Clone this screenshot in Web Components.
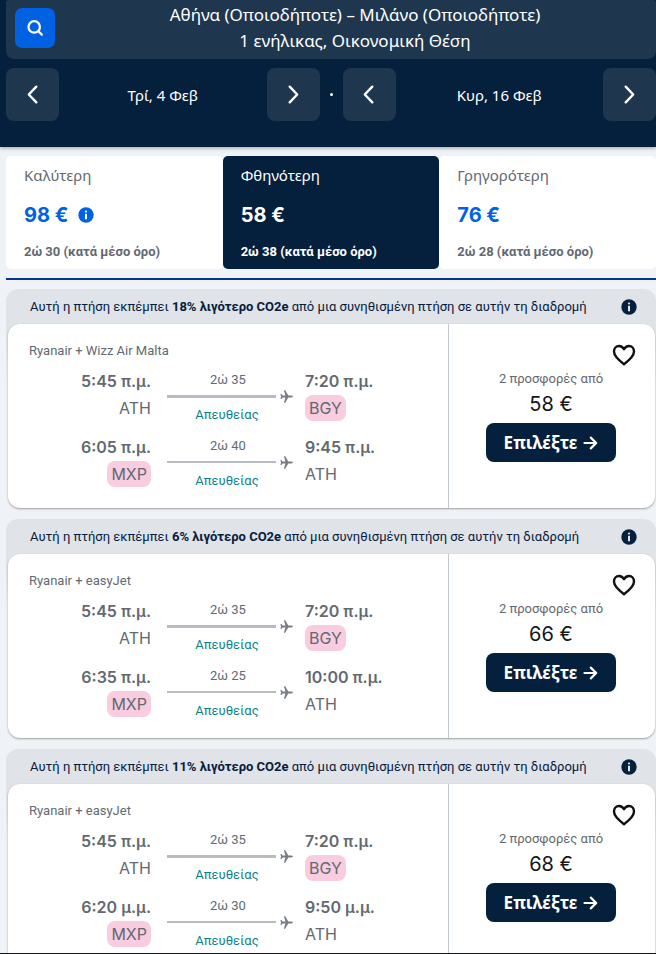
<!DOCTYPE html>
<html lang="el">
<head>
<meta charset="utf-8">
<meta name="viewport" content="width=device-width, initial-scale=1">
<title>Αθήνα – Μιλάνο</title>
<style>
  :root {
    --navy: #05203c;
    --navy-light: #1f364f;
    --blue: #0062e3;
    --grey: #626971;
    --teal: #0c838a;
    --greek: "Noto Sans", "Open Sans", sans-serif;
    --small: Roboto, "Noto Sans", sans-serif;
    --figures: Inter, "Noto Sans", sans-serif;
  }
  body { margin: 0; background: #eff2f6; font-family: var(--greek); color: var(--navy); }
  main { display: block; padding: 9px 0 0 6px; }
</style>
</head>
<body>
<search-header></search-header>
<main>
  <sort-tabs>
    <sort-tab label="Καλύτερη" price="98 €" duration="2ώ 30 (κατά μέσο όρο)" info></sort-tab>
    <sort-tab label="Φθηνότερη" price="58 €" duration="2ώ 38 (κατά μέσο όρο)" selected></sort-tab>
    <sort-tab label="Γρηγορότερη" price="76 €" duration="2ώ 28 (κατά μέσο όρο)"></sort-tab>
  </sort-tabs>
  <flight-card saving="18%" airlines="Ryanair + Wizz Air Malta" price="58 €">
    <flight-leg thick from="5:45 π.μ." from-code="ATH" to="7:20 π.μ." to-code="BGY" mark="to" duration="2ώ 35"></flight-leg>
    <flight-leg from="6:05 π.μ." from-code="MXP" to="9:45 π.μ." to-code="ATH" mark="from" duration="2ώ 40"></flight-leg>
  </flight-card>
  <flight-card saving="6%" airlines="Ryanair + easyJet" price="66 €">
    <flight-leg thick from="5:45 π.μ." from-code="ATH" to="7:20 π.μ." to-code="BGY" mark="to" duration="2ώ 35"></flight-leg>
    <flight-leg from="6:35 π.μ." from-code="MXP" to="10:00 π.μ." to-code="ATH" mark="from" duration="2ώ 25"></flight-leg>
  </flight-card>
  <flight-card saving="11%" airlines="Ryanair + easyJet" price="68 €">
    <flight-leg thick from="5:45 π.μ." from-code="ATH" to="7:20 π.μ." to-code="BGY" mark="to" duration="2ώ 35"></flight-leg>
    <flight-leg from="6:20 μ.μ." from-code="MXP" to="9:50 μ.μ." to-code="ATH" mark="from" duration="2ώ 30"></flight-leg>
  </flight-card>
</main>
<bottom-edge></bottom-edge>

<script>
const base = `
  *, *::before { box-sizing: border-box; }
  button { font: inherit; color: inherit; background: none; border: 0; padding: 0; margin: 0; cursor: pointer; }
  svg { display: block; }
`;

class BaseElement extends HTMLElement {
  connectedCallback() {
    if (this.shadowRoot) return;
    this.attachShadow({ mode: "open" }).innerHTML = `<style>${base}${this.styles()}</style>${this.markup()}`;
  }
  attr(name) { return this.getAttribute(name) || ""; }
}

customElements.define("info-icon", class extends BaseElement {
  styles() { return `:host { display: block; width: 16px; height: 16px; }`; }
  markup() {
    return `<svg width="16" height="16" viewBox="0 0 16 16" aria-hidden="true">
      <circle cx="8" cy="8" r="7.7" fill="currentColor"/>
      <circle cx="8" cy="4.5" r="1.1" fill="var(--hole, #fff)"/>
      <path d="M7 6.700h2v5.500H7z" fill="var(--hole, #fff)"/>
    </svg>`;
  }
});

customElements.define("date-stepper", class extends BaseElement {
  styles() {
    return `
      :host { display: flex; align-items: center; justify-content: space-between; font-size: 15px; line-height: 20px; }
      button { display: grid; place-items: center; width: 53px; height: 53px; border-radius: 8px; background: var(--navy-light); }
    `;
  }
  markup() {
    const arrow = d => `<svg width="24" height="24" viewBox="0 0 24 24" fill="none" stroke="#fff" stroke-width="2.4" stroke-linecap="round" stroke-linejoin="round"><path d="${d}"/></svg>`;
    return `<button aria-label="Προηγούμενη ημέρα">${arrow("M15.3 3.7 7.8 11.5l7.5 7.8")}</button>
      <span><slot></slot></span>
      <button aria-label="Επόμενη ημέρα">${arrow("M8.7 3.7 16.2 11.5l-7.5 7.8")}</button>`;
  }
});

customElements.define("search-header", class extends BaseElement {
  styles() {
    return `
      :host { display: block; background: var(--navy); color: #fff; padding: 0 0 26px 6px; box-shadow: 0 1px 4px #25201f66; }
      .summary { display: flex; align-items: center; padding: 2px 9px 5px; border-radius: 3px 3px 8px 8px; background: var(--navy-light); font-size: 17px; line-height: 26px; }
      .summary button { display: grid; place-items: center; width: 40px; height: 40px; border-radius: 7px; background: var(--blue); }
      .text { flex: 1; text-align: center; padding-left: 8px; }
      p { margin: 0; }
      .dates { display: grid; grid-template-columns: 1fr 23px 1fr; align-items: center; margin-top: 9px; }
      .dot { width: 3px; height: 3px; border-radius: 50%; background: #fff; margin: 0 auto; }
    `;
  }
  markup() {
    return `<div class="summary">
        <button aria-label="Αναζήτηση"><svg width="18" height="18" viewBox="0 0 18 18" fill="none" stroke="#fff" stroke-width="2.2" stroke-linecap="round"><circle cx="8.2" cy="7.9" r="5.7"/><path d="m12.4 12.2 3.4 3.4"/></svg></button>
        <div class="text"><p>Αθήνα (Οποιοδήποτε) – Μιλάνο (Οποιοδήποτε)</p><p>1 ενήλικας, Οικονομική Θέση</p></div>
      </div>
      <div class="dates">
        <date-stepper>Τρί, 4 Φεβ</date-stepper>
        <span class="dot"></span>
        <date-stepper>Κυρ, 16 Φεβ</date-stepper>
      </div>`;
  }
});

customElements.define("sort-tabs", class extends BaseElement {
  styles() { return `:host { display: grid; grid-template-columns: repeat(3, 1fr); padding-bottom: 9px; border-bottom: 2px solid #02378c; }`; }
  markup() { return `<slot></slot>`; }
});

customElements.define("sort-tab", class extends BaseElement {
  styles() {
    return `
      :host { display: block; }
      button { display: block; width: 100%; height: 100%; padding: 8px 18px 7px; border-radius: 5px; background: #fff; color: var(--grey); text-align: left; }
      .label { display: block; font-size: 15px; line-height: 22px; }
      .price { display: flex; align-items: center; gap: 10px; margin: 15px 0 13px; color: var(--blue); font: 700 20px/28px var(--figures); }
      .duration { display: block; font: 700 13px/20px var(--small); }
      :host([selected]) button { background: var(--navy); color: #fff; }
      :host([selected]) .price { color: #fff; }
    `;
  }
  markup() {
    return `<button aria-pressed="${this.hasAttribute("selected")}">
      <span class="label">${this.attr("label")}</span>
      <span class="price">${this.attr("price")}${this.hasAttribute("info") ? "<info-icon></info-icon>" : ""}</span>
      <span class="duration">${this.attr("duration")}</span>
    </button>`;
  }
});

customElements.define("flight-leg", class extends BaseElement {
  styles() {
    return `
      :host { display: grid; grid-template-columns: 1fr 126px 1fr; color: var(--grey); }
      .end { display: flex; flex-direction: column; gap: 2px; }
      .from { align-items: flex-end; padding-right: 16px; }
      .to { align-items: flex-start; padding-left: 12px; }
      .time { font: 600 16px/24px var(--figures); white-space: nowrap; }
      .code { font: 400 16px/26px var(--figures); }
      .marked { padding: 0 4px; border-radius: 8px; background: #f9cce0; }
      .path { padding-top: 2px; font: 400 13px/18px var(--small); text-align: center; }
      .label { padding-right: 4px; }
      .line { display: flex; align-items: center; gap: 4px; height: 14px; }
      .line::before { content: ""; flex: 1; height: 2px; background: #b7bbc2; }
      :host([thick]) .line::before { height: 3px; }
      .stops { color: var(--teal); margin-top: 3px; padding-right: 6px; }
    `;
  }
  markup() {
    const end = side => `<div class="end ${side}"><span class="time">${this.attr(side)}</span>
      <span class="code${this.attr("mark") === side ? " marked" : ""}">${this.attr(side + "-code")}</span></div>`;
    return `${end("from")}
      <div class="path"><div class="label">${this.attr("duration")}</div>
        <div class="line"><svg width="13" height="13" viewBox="0 0 13 13" fill="#777c85"><path d="M12.8 6.5c0 .6-.8.9-1.6.9H8.3L5.2 12.7H3.9L5.4 7.4H2.6L1.5 9H.4L1.1 6.5.4 4h1.1L2.6 5.6h2.8L3.9.3h1.3L8.3 5.6h2.9c.8 0 1.6.3 1.6.9Z"/></svg></div>
        <div class="stops">Απευθείας</div></div>
      ${end("to")}`;
  }
});

customElements.define("flight-card", class extends BaseElement {
  styles() {
    return `
      :host { display: block; margin-top: 9px; border-radius: 12px; background: linear-gradient(#e0e3e8 44px, #e0e3e800 90px); }
      :host(:not(:first-of-type)) { margin-top: 11px; }
      .banner { display: flex; align-items: center; justify-content: space-between; height: 35px; padding: 0 19px 0 24px; font: 400 13px/20px var(--small); }
      .banner p { margin: 0; }
      .banner button { --hole: #e0e3e8; }
      .card { display: flex; min-height: 184px; margin: 0 1px 0 2px; border-radius: 12px; background: #fff; box-shadow: 0 1px 2px #25201f66; }
      .legs { flex: 1; padding: 18px 0; }
      .airlines { margin: 0 0 9px 21px; color: var(--grey); font: 400 13px/18px var(--small); }
      .list { display: grid; gap: 11px; padding-left: 4px; }
      .offer { display: flex; flex-direction: column; align-items: center; width: 207px; border-left: 1px solid #c1c7cf; padding: 19px 2px 0 0; }
      .save { align-self: flex-end; margin: 0 17px 2px 0; }
      .count { font: 400 13px/20px var(--small); color: var(--grey); }
      .price { font: 400 20px/28px var(--figures); color: #161616; margin: 1px 0 5px; }
      .choose { display: flex; align-items: center; justify-content: center; gap: 6px; width: 130px; height: 39px; border-radius: 8px; background: var(--navy); color: #fff; font: 700 17px/24px var(--greek); }
    `;
  }
  markup() {
    return `<div class="banner">
        <p>Αυτή η πτήση εκπέμπει <b>${this.attr("saving")} λιγότερο CO2e</b> από μια συνηθισμένη πτήση σε αυτήν τη διαδρομή</p>
        <button aria-label="Πληροφορίες"><info-icon></info-icon></button>
      </div>
      <div class="card">
        <div class="legs"><p class="airlines">${this.attr("airlines")}</p><div class="list"><slot></slot></div></div>
        <div class="offer">
          <button class="save" aria-label="Αποθήκευση"><svg width="24" height="24" viewBox="0 0 24 24" fill="none" stroke="#111" stroke-width="2.4" stroke-linejoin="round"><path d="M12 21.2C8.500 18.600 2 13.700 2 8.600 2 5.500 4.200 3 7 3c2.200 0 4 1.300 5 3.300C13 4.300 14.800 3 17 3c2.800 0 5 2.500 5 5.600 0 5.100-6.500 10-10 12.600Z"/></svg></button>
          <span class="count">2 προσφορές από</span>
          <span class="price">${this.attr("price")}</span>
          <button class="choose">Επιλέξτε<svg width="15" height="14" viewBox="0 0 15 14" fill="none" stroke="#fff" stroke-width="2.2" stroke-linecap="round" stroke-linejoin="round"><path d="M1.5 7h11.500M7.800 1.600 13.200 7l-5.400 5.400"/></svg></button>
        </div>
      </div>`;
  }
});

customElements.define("bottom-edge", class extends BaseElement {
  styles() { return `:host { position: fixed; inset: auto 0 0 0; height: 1px; background: #15171c; }`; }
  markup() { return ``; }
});
</script>
</body>
</html>
